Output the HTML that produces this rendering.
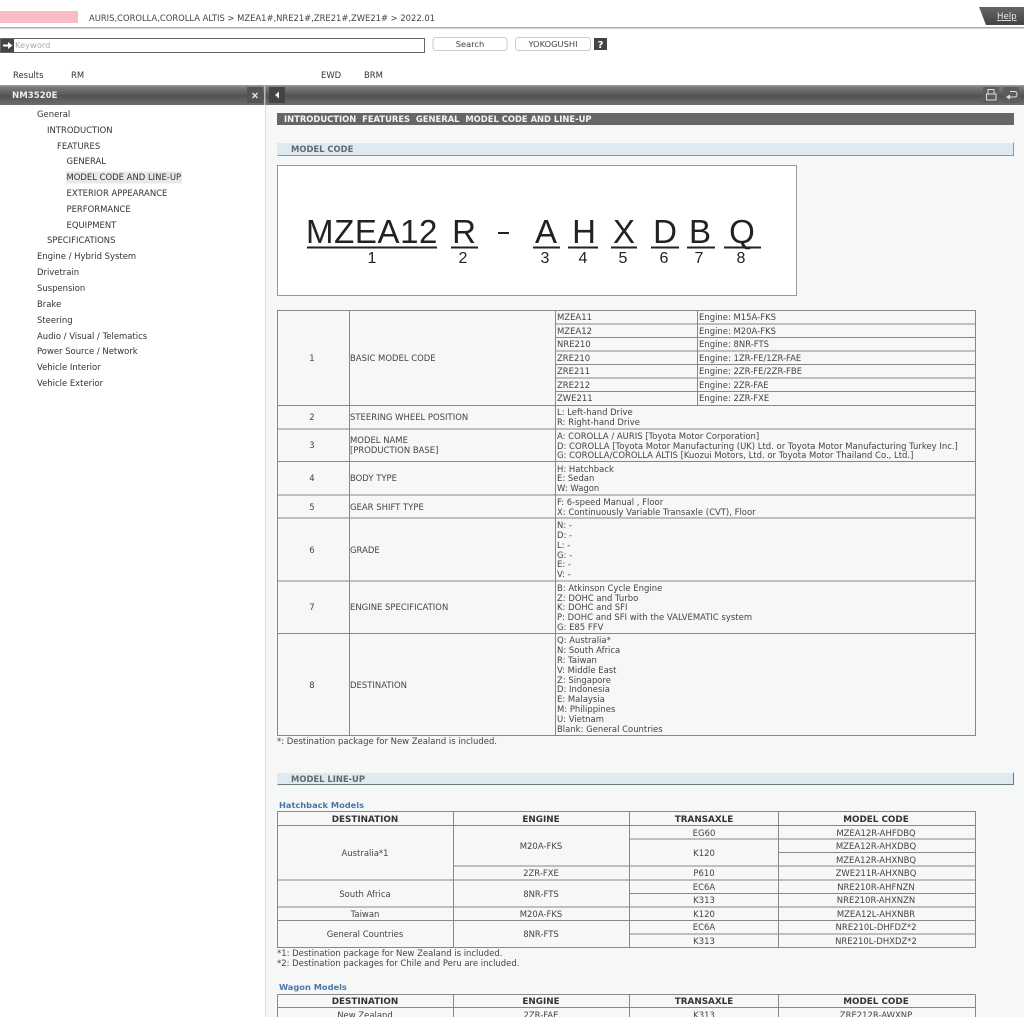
<!DOCTYPE html>
<html><head><meta charset="utf-8"><style>
html,body{margin:0;padding:0;background:#fff;width:1024px;height:1024px;overflow:hidden}
svg{display:block;filter:blur(.3px)}
text{font-family:"DejaVu Sans",sans-serif;font-size:8.3px;fill:#444;white-space:pre}
.n text,text.n{font-size:8.45px;fill:#333}
.m{text-anchor:middle}
.b{font-weight:bold}
.t text{font-size:8.46px}
.t text.b{font-size:8.8px}
.hl{stroke:#888;stroke-width:1;fill:none}
.c{font-family:"Liberation Sans",sans-serif;font-size:33px;fill:#222;text-anchor:middle}
.d{font-family:"Liberation Sans",sans-serif;font-size:16px;fill:#222;text-anchor:middle}
</style></head><body>
<svg width="1024" height="1024" viewBox="0 0 1024 1024" xmlns="http://www.w3.org/2000/svg">
<defs>
<linearGradient id="g" x1="0" y1="0" x2="0" y2="1"><stop offset="0" stop-color="#a0a0a0"/><stop offset=".12" stop-color="#7a7a7a"/><stop offset=".55" stop-color="#525252"/><stop offset="1" stop-color="#6e6e6e"/></linearGradient>
<linearGradient id="h" x1="0" y1="0" x2="0" y2="1"><stop offset="0" stop-color="#666"/><stop offset="1" stop-color="#444"/></linearGradient>
</defs>
<rect width="1024" height="1024" fill="#fff"/>
<!-- top -->
<rect x="0" y="11" width="78" height="12" fill="#f9bcc6"/>
<text x="89" y="21" style="font-size:8.4px">AURIS,COROLLA,COROLLA ALTIS &gt; MZEA1#,NRE21#,ZRE21#,ZWE21# &gt; 2022.01</text>
<rect x="0" y="27" width="1024" height="1.5" fill="#aaa"/>
<path d="M979 7H1024V25H986Z" fill="url(#h)"/>
<text x="997" y="19" style="font-size:8.6px;fill:#eee;text-decoration:underline">Help</text>
<!-- search -->
<rect x="0.5" y="38.5" width="424" height="14" fill="#fff" stroke="#666"/>
<rect x="1" y="39" width="13" height="13" fill="#444"/>
<path d="M3 44.5H8V42L12.5 45.5L8 49V46.5H3Z" fill="#fff"/>
<text x="15" y="48" style="fill:#aaa;font-size:8.3px">Keyword</text>
<rect x="433" y="37.500" width="74" height="13" rx="3" fill="#fff" stroke="#ccc"/>
<text x="470" y="47" class="m" style="font-size:8.3px">Search</text>
<rect x="515.500" y="37.500" width="75" height="13" rx="3" fill="#fff" stroke="#ccc"/>
<text x="544" y="47" style="font-size:8.300px" text-anchor="middle" dx="9">YOKOGUSHI</text>
<rect x="594" y="38" width="13" height="12" fill="#444"/>
<text x="600.500" y="48" class="m b" style="fill:#fff;font-size:10px">?</text>
<g class="n"><text x="13" y="78">Results</text><text x="71" y="78">RM</text><text x="321" y="78">EWD</text><text x="364" y="78">BRM</text></g>
<!-- panes -->
<rect x="266" y="105" width="758" height="912" fill="#f5f8f7"/>
<rect x="265" y="105" width="1" height="912" fill="#ddd"/>
<rect x="0" y="85" width="1024" height="20" fill="url(#g)"/>
<rect x="264" y="85" width="1.500" height="20" fill="#bbb"/>
<text x="12" y="98" class="b" style="fill:#eee;font-size:8.600px">NM3520E</text>
<rect x="247" y="87" width="16" height="16" fill="#555"/>
<path d="M252.500 93L257.500 98M257.500 93L252.500 98" stroke="#eee" stroke-width="1.300"/>
<rect x="269" y="87" width="16" height="16" fill="#444"/>
<path d="M279 91.500V98.500L275 95Z" fill="#eee"/>
<rect x="983" y="87" width="16" height="16" fill="#5c5c5c"/>
<path d="M988 89.500H994V94H988ZM986.500 94H996V100H986.500Z" fill="none" stroke="#ddd"/>
<rect x="1003" y="87" width="16" height="16" fill="#5c5c5c"/>
<path d="M1010 91.500H1014.500Q1017 91.500 1017 94.500Q1017 97 1014.500 97H1009" fill="none" stroke="#ddd"/>
<path d="M1010 94.500L1006 97L1010 99.500Z" fill="#ddd"/>
<!-- nav -->
<rect x="66" y="171.500" width="116" height="12" fill="#e8e8e8"/>
<g class="n">
<text x="37" y="117">General</text>
<text x="47" y="133">INTRODUCTION</text>
<text x="57" y="149">FEATURES</text>
<text x="66.500" y="164">GENERAL</text>
<text x="66.500" y="180">MODEL CODE AND LINE-UP</text>
<text x="66.500" y="196">EXTERIOR APPEARANCE</text>
<text x="66.500" y="212">PERFORMANCE</text>
<text x="66.500" y="228">EQUIPMENT</text>
<text x="47" y="243">SPECIFICATIONS</text>
<text x="37" y="259">Engine / Hybrid System</text>
<text x="37" y="275">Drivetrain</text>
<text x="37" y="291">Suspension</text>
<text x="37" y="307">Brake</text>
<text x="37" y="323">Steering</text>
<text x="37" y="339">Audio / Visual / Telematics</text>
<text x="37" y="354">Power Source / Network</text>
<text x="37" y="370">Vehicle Interior</text>
<text x="37" y="386">Vehicle Exterior</text>
</g>
<!-- headings -->
<rect x="277" y="113" width="737" height="12" fill="#666"/>
<text x="284" y="122" class="b" style="fill:#f5f5f5;font-size:8.400px">INTRODUCTION  FEATURES  GENERAL  MODEL CODE AND LINE-UP</text>
<path d="M277.500 155.500H1013.500V142.500" fill="none" stroke="#8a9a9f"/>
<rect x="277" y="143" width="736" height="12" fill="#deeaef"/>
<text x="291" y="152" class="b" style="fill:#5f6b70;font-size:8.400px">MODEL CODE</text>
<!-- code image -->
<rect x="277.500" y="165.500" width="519" height="130" fill="#fff" stroke="#999"/>
<g>
<text class="c" x="372" y="243" style="letter-spacing:.6px">MZEA12</text>
<text class="c" x="464" y="243">R</text>
<rect x="498" y="232" width="11" height="2" fill="#222"/>
<text class="c" x="546" y="243">A</text>
<text class="c" x="584" y="243">H</text>
<text class="c" x="624" y="243">X</text>
<text class="c" x="665" y="243">D</text>
<text class="c" x="700" y="243">B</text>
<text class="c" x="742" y="243">Q</text>
<g fill="#222">
<rect x="307" y="246.500" width="130" height="2"/><rect x="451" y="246.500" width="27" height="2"/><rect x="533" y="246.500" width="27" height="2"/><rect x="568" y="246.500" width="30" height="2"/><rect x="611" y="246.500" width="26" height="2"/><rect x="651" y="246.500" width="28" height="2"/><rect x="687" y="246.500" width="28" height="2"/><rect x="724" y="246.500" width="37" height="2"/>
</g>
<text class="d" x="372" y="263">1</text><text class="d" x="463" y="263">2</text><text class="d" x="545" y="263">3</text><text class="d" x="583" y="263">4</text><text class="d" x="623" y="263">5</text><text class="d" x="664" y="263">6</text><text class="d" x="699" y="263">7</text><text class="d" x="741" y="263">8</text>
</g>
<!-- table 1 -->
<path class="hl" d="M277.500 310.500H975.500V735.500H277.500ZM349.500 310.500V735.500M555.500 310.500V735.500M697.500 310.500V405M555.500 324H975.500M555.500 337.500H975.500M555.500 351H975.500M555.500 364.500H975.500M555.500 378H975.500M555.500 391.500H975.500M277.500 405.500H975.500M277.500 429H975.500M277.500 461.500H975.500M277.500 495H975.500M277.500 518H975.500M277.500 581H975.500M277.500 633.500H975.500"/>
<g class="t">
<text class="m" x="312" y="361">1</text><text x="350" y="361">BASIC MODEL CODE</text>
<text class="m" x="312" y="420">2</text><text x="350" y="420">STEERING WHEEL POSITION</text>
<text class="m" x="312" y="448">3</text><text x="350" y="443">MODEL NAME</text><text x="350" y="453">[PRODUCTION BASE]</text>
<text class="m" x="312" y="481">4</text><text x="350" y="481">BODY TYPE</text>
<text class="m" x="312" y="510">5</text><text x="350" y="510">GEAR SHIFT TYPE</text>
<text class="m" x="312" y="553">6</text><text x="350" y="553">GRADE</text>
<text class="m" x="312" y="610">7</text><text x="350" y="610">ENGINE SPECIFICATION</text>
<text class="m" x="312" y="688">8</text><text x="350" y="688">DESTINATION</text>
<text x="557" y="320">MZEA11</text><text x="699" y="320">Engine: M15A-FKS</text>
<text x="557" y="334">MZEA12</text><text x="699" y="334">Engine: M20A-FKS</text>
<text x="557" y="347">NRE210</text><text x="699" y="347">Engine: 8NR-FTS</text>
<text x="557" y="361">ZRE210</text><text x="699" y="361">Engine: 1ZR-FE/1ZR-FAE</text>
<text x="557" y="374">ZRE211</text><text x="699" y="374">Engine: 2ZR-FE/2ZR-FBE</text>
<text x="557" y="388">ZRE212</text><text x="699" y="388">Engine: 2ZR-FAE</text>
<text x="557" y="401">ZWE211</text><text x="699" y="401">Engine: 2ZR-FXE</text>
<text x="557" y="415">L: Left-hand Drive</text><text x="557" y="425">R: Right-hand Drive</text>
<text x="557" y="439">A: COROLLA / AURIS [Toyota Motor Corporation]</text>
<text x="557" y="449">D: COROLLA [Toyota Motor Manufacturing (UK) Ltd. or Toyota Motor Manufacturing Turkey Inc.]</text>
<text x="557" y="458">G: COROLLA/COROLLA ALTIS [Kuozui Motors, Ltd. or Toyota Motor Thailand Co., Ltd.]</text>
<text x="557" y="472">H: Hatchback</text><text x="557" y="481">E: Sedan</text><text x="557" y="491">W: Wagon</text>
<text x="557" y="505">F: 6-speed Manual , Floor</text><text x="557" y="515">X: Continuously Variable Transaxle (CVT), Floor</text>
<text x="557" y="528">N: -</text><text x="557" y="538">D: -</text><text x="557" y="548">L: -</text><text x="557" y="558">G: -</text><text x="557" y="567">E: -</text><text x="557" y="577">V: -</text>
<text x="557" y="591">B: Atkinson Cycle Engine</text><text x="557" y="601">Z: DOHC and Turbo</text><text x="557" y="610">K: DOHC and SFI</text><text x="557" y="620">P: DOHC and SFI with the VALVEMATIC system</text><text x="557" y="630">G: E85 FFV</text>
<text x="557" y="643">Q: Australia*</text><text x="557" y="653">N: South Africa</text><text x="557" y="663">R: Taiwan</text><text x="557" y="673">V: Middle East</text><text x="557" y="683">Z: Singapore</text><text x="557" y="692">D: Indonesia</text><text x="557" y="702">E: Malaysia</text><text x="557" y="712">M: Philippines</text><text x="557" y="722">U: Vietnam</text><text x="557" y="732">Blank: General Countries</text>
<text x="277" y="744">*: Destination package for New Zealand is included.</text>
</g>
<!-- line-up -->
<path d="M277.500 784.500H1013.500V772.500" fill="none" stroke="#6a7a7f"/>
<rect x="277" y="773" width="736" height="11" fill="#deeaef"/>
<text x="291" y="782" class="b" style="fill:#5f6b70;font-size:8.400px">MODEL LINE-UP</text>
<text x="279" y="808" class="b" style="fill:#4a76a8;font-size:8.250px">Hatchback Models</text>
<path class="hl" d="M277.500 811.500H975.500V947.500H277.500ZM453.500 811.500V947.500M629.500 811.500V947.500M778.500 811.500V947.500M277.500 825.500H975.500M629.500 839H975.500M778.500 852.500H975.500M453.500 866H975.500M277.500 880H975.500M629.500 893.500H975.500M277.500 907H975.500M277.500 920.500H975.500M629.500 934H975.500"/>
<g class="t">
<text class="m b" x="365" y="822" style="fill:#333">DESTINATION</text><text class="m b" x="541" y="822" style="fill:#333">ENGINE</text><text class="m b" x="704" y="822" style="fill:#333">TRANSAXLE</text><text class="m b" x="876" y="822" style="fill:#333">MODEL CODE</text>
<text class="m" x="365" y="856">Australia*1</text><text class="m" x="541" y="849">M20A-FKS</text><text class="m" x="541" y="876">2ZR-FXE</text>
<text class="m" x="704" y="836">EG60</text><text class="m" x="704" y="856">K120</text><text class="m" x="704" y="876">P610</text>
<text class="m" x="876" y="836">MZEA12R-AHFDBQ</text><text class="m" x="876" y="849">MZEA12R-AHXDBQ</text><text class="m" x="876" y="863">MZEA12R-AHXNBQ</text><text class="m" x="876" y="876">ZWE211R-AHXNBQ</text>
<text class="m" x="365" y="897">South Africa</text><text class="m" x="541" y="897">8NR-FTS</text>
<text class="m" x="704" y="890">EC6A</text><text class="m" x="704" y="903">K313</text>
<text class="m" x="876" y="890">NRE210R-AHFNZN</text><text class="m" x="876" y="903">NRE210R-AHXNZN</text>
<text class="m" x="365" y="917">Taiwan</text><text class="m" x="541" y="917">M20A-FKS</text><text class="m" x="704" y="917">K120</text><text class="m" x="876" y="917">MZEA12L-AHXNBR</text>
<text class="m" x="365" y="937">General Countries</text><text class="m" x="541" y="937">8NR-FTS</text>
<text class="m" x="704" y="930">EC6A</text><text class="m" x="704" y="944">K313</text>
<text class="m" x="876" y="930">NRE210L-DHFDZ*2</text><text class="m" x="876" y="944">NRE210L-DHXDZ*2</text>
<text x="277" y="956">*1: Destination package for New Zealand is included.</text>
<text x="277" y="966">*2: Destination packages for Chile and Peru are included.</text>
</g>
<text x="279" y="990" class="b" style="fill:#4a76a8;font-size:8.250px">Wagon Models</text>
<path class="hl" d="M277.500 994.500H975.500M277.500 1007.500H975.500M277.500 994.500V1017M453.500 994.500V1017M629.500 994.500V1017M778.500 994.500V1017M975.500 994.500V1017"/>
<g class="t">
<text class="m b" x="365" y="1004" style="fill:#333">DESTINATION</text><text class="m b" x="541" y="1004" style="fill:#333">ENGINE</text><text class="m b" x="704" y="1004" style="fill:#333">TRANSAXLE</text><text class="m b" x="876" y="1004" style="fill:#333">MODEL CODE</text>
<text class="m" x="365" y="1018">New Zealand</text><text class="m" x="541" y="1018">2ZR-FAE</text><text class="m" x="704" y="1018">K313</text><text class="m" x="876" y="1018">ZRE212R-AWXNP</text>
</g>
<rect x="0" y="1017" width="1024" height="7" fill="#fff"/>
</svg>
</body></html>
